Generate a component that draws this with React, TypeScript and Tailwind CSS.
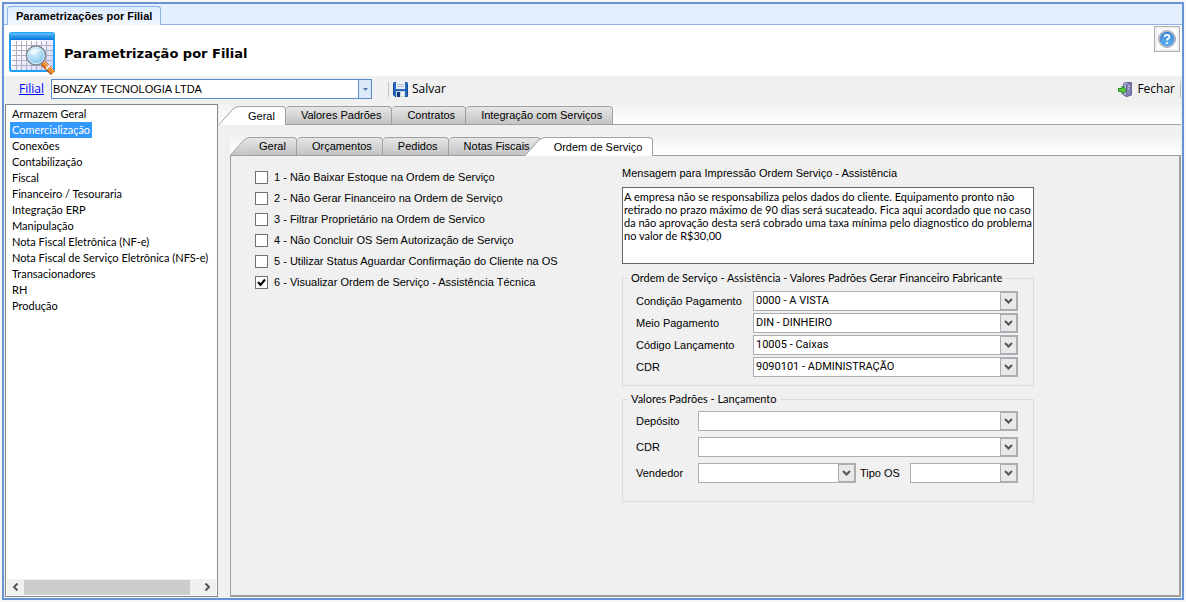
import { useState } from "react";
import type { ReactNode } from "react";
import clsx from "clsx";

const modules = [
  "Armazem Geral",
  "Comercialização",
  "Conexões",
  "Contabilização",
  "Fiscal",
  "Financeiro / Tesouraria",
  "Integração ERP",
  "Manipulação",
  "Nota Fiscal Eletrônica (NF-e)",
  "Nota Fiscal de Serviço Eletrônica (NFS-e)",
  "Transacionadores",
  "RH",
  "Produção",
];

const mainTabs = ["Geral", "Valores Padrões", "Contratos", "Integração com Serviços"];
const subTabs = ["Geral", "Orçamentos", "Pedidos", "Notas Fiscais", "Ordem de Serviço"];

const options = [
  { label: "1 - Não Baixar Estoque na Ordem de Serviço", checked: false },
  { label: "2 - Não Gerar Financeiro na Ordem de Serviço", checked: false },
  { label: "3 - Filtrar Proprietário na Ordem de Servico", checked: false },
  { label: "4 - Não Concluir OS Sem Autorização de Serviço", checked: false },
  { label: "5 - Utilizar Status Aguardar Confirmação do Cliente na OS", checked: false },
  { label: "6 - Visualizar Ordem de Serviço - Assistência Técnica", checked: true },
];

const financeFields = [
  { id: "condicao", label: "Condição Pagamento", value: "0000 - A VISTA" },
  { id: "meio", label: "Meio Pagamento", value: "DIN - DINHEIRO" },
  { id: "codigo", label: "Código Lançamento", value: "10005 - Caixas" },
  { id: "cdr-fin", label: "CDR", value: "9090101 - ADMINISTRAÇÃO" },
];

const message = `A empresa não se responsabiliza pelos dados do cliente. Equipamento pronto não
retirado no prazo máximo de 90 dias será sucateado. Fica aqui acordado que no caso
da não aprovação desta será cobrado uma taxa mínima pelo diagnostico do problema
no valor de R$30,00`;

function FilialLogo() {
  return (
    <svg width="48" height="44" viewBox="0 0 48 44" className="shrink-0">
      <defs>
        <linearGradient id="sheet" x1="0" y1="0" x2="1" y2="1">
          <stop offset="0.3" stopColor="#ffffff" />
          <stop offset="1" stopColor="#cfcdfb" />
        </linearGradient>
        <linearGradient id="bar" x1="0" y1="0" x2="0" y2="1">
          <stop offset="0" stopColor="#6cc0f8" />
          <stop offset="0.5" stopColor="#2a97ee" />
          <stop offset="1" stopColor="#0a74d8" />
        </linearGradient>
        <radialGradient id="lens" cx="0.4" cy="0.3" r="0.8">
          <stop offset="0" stopColor="#e8f8ff" />
          <stop offset="0.6" stopColor="#9fd3f0" />
          <stop offset="1" stopColor="#6fb2dc" />
        </radialGradient>
      </defs>
      <rect x="2" y="1" width="44" height="38" rx="2" fill="url(#sheet)" stroke="#1da0f5" strokeWidth="2" />
      <rect x="2" y="1" width="44" height="7" rx="1" fill="url(#bar)" />
      <path d="M4 13.500H45M4 18.500H45M4 23.500H45M4 28.500H45M4 33.500H45M8.500 9V38M13.500 9V38M18.500 9V38M23.500 9V38M28.500 9V38M33.500 9V38M38.500 9V38" stroke="#b0b0c0" fill="none" />
      <path d="M35 31L45 41" stroke="#a84a10" strokeWidth="6" />
      <path d="M35 30.500L45 40.500" stroke="#f58a2c" strokeWidth="4" />
      <path d="M36 29.500L45.500 38.500" stroke="#ffd0a0" strokeWidth="1" />
      <path d="M38 37L42 33" stroke="#e8e8f0" strokeWidth="2" />
      <circle cx="28" cy="23.500" r="9.500" fill="url(#lens)" stroke="#7d8894" strokeWidth="1.500" />
      <circle cx="28" cy="23.500" r="8.200" fill="none" stroke="#d8f0fa" />
      <path d="M21.500 22C23 16.500 30 15.500 33 19C29 19 26 23 21.500 22Z" fill="#fff" opacity="0.6" />
    </svg>
  );
}

function SaveIcon() {
  return (
    <svg width="15" height="15" viewBox="0 0 15 15">
      <path d="M0.500 1.500Q0.500 0.500 1.500 0.500H13.500Q14.500 0.500 14.500 1.500V14.500H2L0.500 13Z" fill="#2468c0" stroke="#174a94" />
      <rect x="3" y="0" width="9" height="7" fill="#eef3fa" />
      <path d="M4 2.500H11M4 4.500H11" stroke="#a9bad2" />
      <rect x="3" y="9" width="9" height="6" fill="#c9d3e0" />
      <rect x="4" y="10" width="3" height="5" fill="#123a78" />
      <rect x="8" y="10" width="3" height="4" fill="#f4f7fb" />
    </svg>
  );
}

function ExitIcon() {
  return (
    <svg width="15" height="15" viewBox="0 0 15 15">
      <path d="M5.500 1.500L8 0.500H13.500V13L8 14.500L5.500 13Z" fill="#aeacd6" stroke="#6c6a96" />
      <path d="M8.500 2.500L13 1V13L8.500 14.500Z" fill="#8684bc" stroke="#6c6a96" />
      <path d="M10 4.500L12 4M10 7H11" stroke="#e4e4f6" />
      <path d="M0.500 6.500H4V4L8.500 8L4 12V9.500H0.500Z" fill="#5fd042" stroke="#238a1c" />
    </svg>
  );
}

function HelpIcon() {
  return (
    <svg width="20" height="20" viewBox="0 0 20 20" className="bg-white">
      <defs>
        <linearGradient id="help" x1="0" y1="0" x2="0" y2="1">
          <stop offset="0" stopColor="#3f86d8" />
          <stop offset="1" stopColor="#5cb4f6" />
        </linearGradient>
      </defs>
      <circle cx="10" cy="10" r="8.500" fill="#d9dde3" stroke="#a0a7b2" />
      <circle cx="10" cy="10" r="7" fill="url(#help)" stroke="#2d6fc0" strokeWidth="0.600" />
      <path d="M7.600 8C7.600 5.200 12.400 5.200 12.400 7.800C12.400 9.600 10 9.500 10 11.600" fill="none" stroke="#fff" strokeWidth="1.800" />
      <circle cx="10" cy="14" r="1.100" fill="#fff" />
    </svg>
  );
}

function Chevron({ className }: { className?: string }) {
  return (
    <svg width="9" height="8" viewBox="0 0 9 8" className={className}>
      <path d="M1 2L4.500 5.500L8 2" fill="none" stroke="#555" strokeWidth="2" />
    </svg>
  );
}

function Combo({ id, value, className }: { id: string; value?: string; className?: string }) {
  return (
    <div className={clsx("relative h-5", className)}>
      <select id={id} className="block h-5 w-full appearance-none border border-[#abadb3] bg-white pl-[2px] font-[Roboto,sans-serif] text-[11px] outline-none">
        <option>{value ?? ""}</option>
      </select>
      <span className="pointer-events-none absolute inset-y-0 right-0 flex w-[18px] items-center justify-center border-2 border-l border-[#abadb3] bg-[#e9e9e9]">
        <Chevron />
      </span>
    </div>
  );
}

type TabProps = {
  label: string;
  active: boolean;
  slanted: boolean;
  overlap: boolean;
  onClick: () => void;
};

function Tab({ label, active, slanted, overlap, onClick }: TabProps) {
  const fill = active ? "bg-white" : "border-b bg-linear-to-b from-[#e6e6e6] to-[#c3c3c3]";
  return (
    <button
      type="button"
      role="tab"
      aria-selected={active}
      onClick={onClick}
      className={clsx("-mb-px flex h-[19px] items-stretch whitespace-nowrap text-[11px]", overlap && "z-10 -ml-4")}
    >
      {slanted && (
        <svg width="20" height="19" viewBox="0 0 20 19" className="shrink-0">
          <defs>
            <linearGradient id="tab-fill" x1="0" y1="0" x2="0" y2="1">
              <stop offset="0" stopColor="#e6e6e6" />
              <stop offset="1" stopColor="#c3c3c3" />
            </linearGradient>
          </defs>
          <path d="M0 19L14 3Q17 0.500 20 0.500V19Z" fill={active ? "#fff" : "url(#tab-fill)"} />
          <path d="M0 18.500L14 3Q17 0.500 20 0.500" fill="none" stroke="#a0a0a0" />
          {!active && <path d="M0 18.500H20" stroke="#a0a0a0" />}
        </svg>
      )}
      <span
        className={clsx(
          "flex items-center border-t border-r border-[#a0a0a0] pr-[10px]",
          slanted ? "rounded-tr-[4px] pl-[9px]" : "rounded-t-[4px] pl-[15px]",
          fill
        )}
      >
        {label}
      </span>
    </button>
  );
}

function TabStrip({ tabs, active, onChange }: { tabs: string[]; active: number; onChange: (i: number) => void }) {
  return (
    <div role="tablist" className="flex items-end border-b border-[#a0a0a0] bg-linear-to-b from-[#f0f0f0] to-white pt-1">
      {tabs.map((label, i) => (
        <Tab
          key={label}
          label={label}
          active={i === active}
          slanted={i === 0 || i === active}
          overlap={i > 0 && i === active}
          onClick={() => onChange(i)}
        />
      ))}
    </div>
  );
}

function Group({ title, children }: { title: string; children: ReactNode }) {
  return (
    <fieldset className="border border-[#dcdcdc] pr-[15px] pl-[13px]">
      <legend className="-ml-2 px-[3px] font-[Lato,sans-serif] text-[11px] leading-[14px] whitespace-nowrap">{title}</legend>
      {children}
    </fieldset>
  );
}

function ServiceOrder() {
  return (
    <div className="flex items-start pt-[10px] pl-6">
      <div className="flex w-[367px] shrink-0 flex-col gap-[5px] pt-[3px]">
        {options.map((o) => (
          <label key={o.label} className="flex h-4 items-center gap-[6px] text-[11px]">
            <span className="relative flex">
              <input
                type="checkbox"
                defaultChecked={o.checked}
                className="peer size-[13px] appearance-none border border-[#707070] bg-white"
              />
              <svg width="13" height="13" viewBox="0 0 13 13" className="pointer-events-none absolute inset-0 hidden peer-checked:block">
                <path d="M3 6L5.500 9L10 3.500" fill="none" stroke="#000" strokeWidth="2" />
              </svg>
            </span>
            {o.label}
          </label>
        ))}
      </div>

      <div className="w-[412px]">
        <label htmlFor="mensagem" className="block h-[21px] text-[11px] leading-[14px]">
          Mensagem para Impressão Ordem Serviço - Assistência
        </label>
        <textarea
          id="mensagem"
          defaultValue={message}
          className="block h-[77px] w-full resize-none overflow-hidden border border-[#646464] bg-white px-px py-[2px] font-[Lato,sans-serif] text-[11px] leading-[13px] whitespace-pre outline-none"
        />

        <div className="mt-[7px] flex flex-col gap-[6px]">
          <Group title="Ordem de Serviço - Assistência - Valores Padrões Gerar Financeiro Fabricante">
            <div className="flex flex-col gap-[2px] pt-[6px] pb-[8px]">
              {financeFields.map((f) => (
                <div key={f.id} className="flex items-center">
                  <label htmlFor={f.id} className="w-[117px] shrink-0 text-[11px]">{f.label}</label>
                  <Combo id={f.id} value={f.value} className="flex-1" />
                </div>
              ))}
            </div>
          </Group>

          <Group title="Valores Padrões - Lançamento">
            <div className="flex flex-col gap-[6px] pt-[5px] pb-[18px] text-[11px]">
              <div className="flex items-center">
                <label htmlFor="deposito" className="w-[62px] shrink-0">Depósito</label>
                <Combo id="deposito" className="flex-1" />
              </div>
              <div className="flex items-center">
                <label htmlFor="cdr-lanc" className="w-[62px] shrink-0">CDR</label>
                <Combo id="cdr-lanc" className="flex-1" />
              </div>
              <div className="flex items-center">
                <label htmlFor="vendedor" className="w-[62px] shrink-0">Vendedor</label>
                <Combo id="vendedor" className="flex-1" />
                <label htmlFor="tipo-os" className="w-[54px] shrink-0 pl-1">Tipo OS</label>
                <Combo id="tipo-os" className="w-[108px]" />
              </div>
            </div>
          </Group>
        </div>
      </div>
    </div>
  );
}

function ModuleList() {
  const [selected, setSelected] = useState("Comercialização");
  return (
    <div className="flex w-[213px] shrink-0 flex-col border border-[#828790] bg-white p-px">
      <ul className="flex-1 pl-[3px]">
        {modules.map((m) => (
          <li key={m} className="flex h-4">
            <button
              type="button"
              onClick={() => setSelected(m)}
              className={clsx("px-[2px] font-[Lato,sans-serif] text-[11px] leading-4 whitespace-nowrap", m === selected && "bg-[#3399ff] text-white")}
            >
              {m}
            </button>
          </li>
        ))}
      </ul>
      <div className="flex h-4 items-center bg-[#f0f0f0]">
        <span className="flex w-[17px] justify-center"><Chevron className="rotate-90" /></span>
        <span className="h-[15px] w-[166px] bg-[#cdcdcd]" />
        <span className="ml-auto flex w-[17px] justify-center"><Chevron className="-rotate-90" /></span>
      </div>
    </div>
  );
}

export default function App() {
  const [mainTab, setMainTab] = useState(0);
  const [subTab, setSubTab] = useState(4);

  return (
    <div className="flex min-h-screen flex-col bg-[#f7f7f7] p-[2px] font-['Liberation_Sans',Arial,sans-serif] text-black">
      <div className="flex flex-1 flex-col border-2 border-[#6593d3] bg-[#f0f0f0]">
        <div className="flex h-[21px] items-end border-b border-[#8db2e3] bg-[#e3efff] pl-[3px]">
          <button type="button" className="-mb-px h-[19px] rounded-t-[3px] border border-b-0 border-[#8db2e3] bg-linear-to-b from-[#dcebff] to-[#f3f8ff] px-2 text-[11px] font-bold">
            Parametrizações por Filial
          </button>
        </div>

        <header className="flex h-[51px] items-start bg-white pl-1">
          <div className="flex items-center gap-2 pt-[7px]">
            <FilialLogo />
            <h1 className="font-['DejaVu_Sans',sans-serif] text-[13px] leading-4 font-bold">Parametrização por Filial</h1>
          </div>
          <button type="button" aria-label="Ajuda" className="mt-px mr-[2px] ml-auto flex size-[26px] items-center justify-center border border-[#adadad] bg-[#f0f0f0]">
            <HelpIcon />
          </button>
        </header>

        <div className="flex h-[26px] items-center pr-px pl-[15px] font-['Open_Sans',sans-serif] text-[12px]">
          <a href="#filial" className="w-8 text-[#0000ff] underline">Filial</a>
          <div className="relative h-5 w-[321px]">
            <select id="filial" aria-label="Filial" className="block h-5 w-full appearance-none border border-[#5b8ccf] bg-white pl-px font-['Liberation_Sans',sans-serif] text-[11px] outline-none">
              <option>BONZAY TECNOLOGIA LTDA</option>
            </select>
            <span className="pointer-events-none absolute inset-y-0 right-0 flex w-[14px] items-center justify-center border border-[#5b8ccf] bg-[#dce9fb]">
              <svg width="5" height="3" viewBox="0 0 5 3"><path d="M0 0H5L2.500 3Z" fill="#4f74a8" /></svg>
            </span>
          </div>
          <span className="mx-4 h-[15px] w-px bg-[#c4c4c4]" />
          <button type="button" className="-ml-3 flex items-center gap-1"><SaveIcon />Salvar</button>
          <button type="button" className="ml-auto flex items-center gap-1"><ExitIcon />Fechar</button>
          <span className="ml-[5px] h-[17px] w-px bg-[#c4c4c4]" />
        </div>

        <div className="flex flex-1 pr-px pb-px pl-px">
          <div className="flex pt-[2px]">
            <ModuleList />
          </div>
          <div className="flex min-w-0 flex-1 flex-col pl-px">
            <TabStrip tabs={mainTabs} active={mainTab} onChange={setMainTab} />
            <div className="flex flex-1 flex-col pt-2 pl-[11px]">
              <TabStrip tabs={subTabs} active={subTab} onChange={setSubTab} />
              <div className="flex-1 border-r-2 border-b-2 border-l border-[#a0a0a0]">
                <ServiceOrder />
              </div>
            </div>
          </div>
        </div>
      </div>
    </div>
  );
}
